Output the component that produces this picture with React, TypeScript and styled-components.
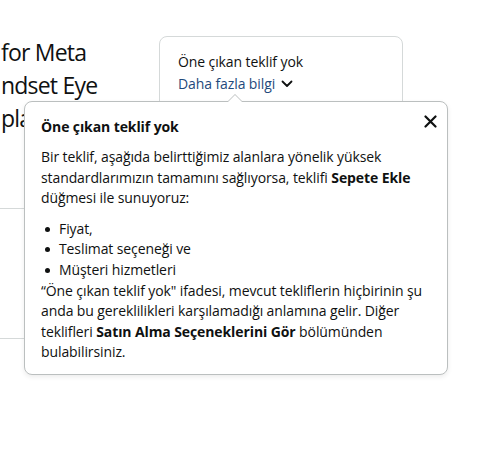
import React from "react";
import styled, { createGlobalStyle } from "styled-components";

const Global = createGlobalStyle`
  html, body { margin: 0; padding: 0; background: #fff; }
  body { font-family: "Open Sans", "Noto Sans", "Liberation Sans", sans-serif; color: #0f1111; }
  * { box-sizing: border-box; }
`;

const Page = styled.div`
  position: relative;
  width: 480px;
  height: 456px;
  overflow: hidden;
  display: flex;
  align-items: flex-start;
`;

const LeftColumn = styled.div`
  width: 159px;
  flex-shrink: 0;
  display: flex;
  flex-direction: column;
  padding-top: 36px;
`;

const Headline = styled.h1`
  margin: 0 0 0 1px;
  font-size: 23px;
  line-height: 33px;
  font-weight: 400;
  letter-spacing: -0.8px;
  color: #0f1111;
  white-space: nowrap;
`;

const Divider = styled.div<{ $top: number }>`
  height: 1px;
  background: #d5d9d9;
  margin-top: ${(p) => p.$top}px;
  width: 140px;
`;

const OfferCard = styled.div`
  margin-top: 36px;
  width: 244px;
  height: 120px;
  border: 1px solid #d5d9d9;
  border-radius: 8px;
  padding: 15px 18px;
  display: flex;
  flex-direction: column;
  gap: 2px;
`;

const CardTitle = styled.div`
  font-size: 14px;
  line-height: 20px;
  letter-spacing: -0.1px;
  color: #0f1111;
`;

const MoreLink = styled.div`
  font-size: 14px;
  line-height: 20px;
  letter-spacing: -0.1px;
  color: #1f4a7c;
  display: flex;
  align-items: center;
  gap: 6px;
`;

const Popover = styled.div`
  position: absolute;
  left: 24px;
  top: 101px;
  width: 424px;
  height: 274px;
  background: #fff;
  border: 1px solid #bbbfbf;
  border-radius: 8px;
  box-shadow: 0 2px 5px rgba(15, 17, 17, 0.08);
  padding: 14px 16px 16px 16px;
  font-size: 14px;
  line-height: 20.6px;
  letter-spacing: -0.1px;
  color: #0f1111;
`;

const Arrow = styled.div`
  position: absolute;
  left: 202px;
  top: -8px;
  width: 0;
  height: 0;
  &::before, &::after {
    content: "";
    position: absolute;
    left: 0;
    border-left: 8px solid transparent;
    border-right: 8px solid transparent;
  }
  &::before {
    top: 0;
    border-bottom: 8px solid #bbbfbf;
  }
  &::after {
    top: 1.4px;
    border-bottom: 8px solid #fff;
  }
`;

const CloseButton = styled.button`
  position: absolute;
  right: 7px;
  top: 9px;
  width: 20px;
  height: 20px;
  padding: 0;
  border: 0;
  background: transparent;
  display: flex;
  align-items: center;
  justify-content: center;
  cursor: pointer;
`;

const PopTitle = styled.h4`
  margin: 0 0 9px 0;
  font-size: 14px;
  line-height: 22px;
  font-weight: 700;
`;

const Para = styled.p`
  margin: 0;
`;

const BulletList = styled.ul`
  margin: 10px 0 0 0;
  padding: 0 0 0 18px;
  list-style: none;
`;

const Bullet = styled.li`
  position: relative;
  &::before {
    content: "";
    position: absolute;
    left: -14px;
    top: 8px;
    width: 5px;
    height: 5px;
    border-radius: 50%;
    background: #0f1111;
  }
`;

export default function App() {
  return (
    <>
      <Global />
      <Page>
        <LeftColumn>
          <Headline>
            for Meta
            <br />
            ndset Eye
            <br />
            play
          </Headline>
          <Divider $top={73} />
          <Divider $top={129} />
        </LeftColumn>
        <OfferCard>
          <CardTitle>Öne çıkan teklif yok</CardTitle>
          <MoreLink>
            Daha fazla bilgi
            <svg width="12" height="8" viewBox="0 0 12 8" fill="none">
              <path d="M1.5 1.5 L6 6 L10.5 1.5" stroke="#0f1111" strokeWidth="1.8" strokeLinecap="round" strokeLinejoin="round" />
            </svg>
          </MoreLink>
        </OfferCard>
        <Popover>
          <Arrow />
          <CloseButton aria-label="Kapat">
            <svg width="13" height="13" viewBox="0 0 13 13">
              <path d="M1.5 1.5 L11.5 11.5 M11.5 1.5 L1.5 11.5" stroke="#0f1111" strokeWidth="2.2" strokeLinecap="round" />
            </svg>
          </CloseButton>
          <PopTitle>Öne çıkan teklif yok</PopTitle>
          <Para>
            Bir teklif, aşağıda belirttiğimiz alanlara yönelik yüksek standardlarımızın tamamını sağlıyorsa, teklifi <b>Sepete Ekle</b> düğmesi ile sunuyoruz:
          </Para>
          <BulletList>
            <Bullet>Fiyat,</Bullet>
            <Bullet>Teslimat seçeneği ve</Bullet>
            <Bullet>Müşteri hizmetleri</Bullet>
          </BulletList>
          <Para>
            “Öne çıkan teklif yok" ifadesi, mevcut tekliflerin hiçbirinin şu anda bu gereklilikleri karşılamadığı anlamına gelir. Diğer teklifleri <b>Satın Alma Seçeneklerini Gör</b> bölümünden bulabilirsiniz.
          </Para>
        </Popover>
      </Page>
    </>
  );
}
